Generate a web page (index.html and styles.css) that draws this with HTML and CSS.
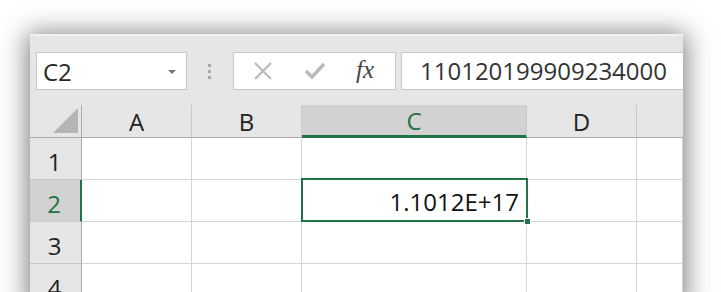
FILE: index.html
```html
<!DOCTYPE html>
<html lang="en">

<head>
  <meta charset="UTF-8" />
  <title>Sheet</title>
  <link rel="stylesheet" href="styles.css">
</head>

<body>
  <div class="window">
    <div class="toolbar">
      <div class="namebox">
        <span>C2</span>
        <span class="caret"></span>
      </div>
      <div class="grip"><i></i><i></i><i></i></div>
      <div class="buttons">
        <svg class="btn" width="22" height="22" viewBox="0 0 22 22">
          <path d="M3 3 L19 19 M19 3 L3 19" stroke="#b9b9b9" stroke-width="2.2" fill="none" />
        </svg>
        <svg class="btn" width="24" height="22" viewBox="0 0 24 22">
          <path d="M3 11 L9 17 L21 4" stroke="#b9b9b9" stroke-width="3.4" fill="none" />
        </svg>
        <span class="fx">fx</span>
      </div>
      <div class="formula">110120199909234000</div>
    </div>

    <div class="grid">
      <div class="corner"><span class="tri"></span></div>
      <div class="colhead">A</div>
      <div class="colhead">B</div>
      <div class="colhead active">C</div>
      <div class="colhead">D</div>
      <div class="colhead last"></div>

      <div class="rowhead">1</div>
      <div class="cell"></div>
      <div class="cell"></div>
      <div class="cell"></div>
      <div class="cell"></div>
      <div class="cell"></div>

      <div class="rowhead active">2</div>
      <div class="cell"></div>
      <div class="cell"></div>
      <div class="cell selected">1.1012E+17<span class="handle"></span></div>
      <div class="cell"></div>
      <div class="cell"></div>

      <div class="rowhead">3</div>
      <div class="cell"></div>
      <div class="cell"></div>
      <div class="cell"></div>
      <div class="cell"></div>
      <div class="cell"></div>

      <div class="rowhead">4</div>
      <div class="cell"></div>
      <div class="cell"></div>
      <div class="cell"></div>
      <div class="cell"></div>
      <div class="cell"></div>
    </div>
  </div>
</body>

</html>
```

FILE: styles.css
```css
* {
  box-sizing: border-box;
  margin: 0;
  padding: 0;
  font-family: 'Open Sans', 'Noto Sans', sans-serif;
}

body {
  background: #fff;
  height: 292px;
  overflow: hidden;
}

.window {
  margin: 34px 0 0 30px;
  width: 653px;
  background: #e6e6e6;
  border-top: 2px solid #f2f2f2;
  box-shadow: 0 2px 24px 3px rgba(0, 0, 0, 0.5);
}

.toolbar {
  display: flex;
  align-items: center;
  padding: 16px 0 15px 6px;
}

.namebox {
  width: 151px;
  height: 38px;
  background: #fff;
  border: 1px solid #c6c6c6;
  display: flex;
  align-items: center;
  justify-content: space-between;
  padding: 0 10px 0 6px;
  font-size: 24px;
  color: #262626;
}

.caret {
  width: 0;
  height: 0;
  border-left: 4px solid transparent;
  border-right: 4px solid transparent;
  border-top: 4px solid #777;
  margin-top: 2px;
}

.grip {
  display: flex;
  flex-direction: column;
  gap: 3px;
  margin: 0 22px 0 21px;
}

.grip i {
  width: 3px;
  height: 3px;
  background: #a8a8a8;
}

.buttons {
  width: 163px;
  height: 38px;
  background: #fff;
  border: 1px solid #c6c6c6;
  display: flex;
  align-items: center;
  padding: 0 0 0 18px;
}

.btn {
  margin-right: 29px;
}

.fx {
  font-family: 'Liberation Serif', serif;
  font-style: italic;
  font-size: 25px;
  color: #444;
  margin-top: -2px;
}

.formula {
  flex: 1;
  height: 38px;
  margin-left: 5px;
  background: #fff;
  border: 1px solid #c6c6c6;
  border-right: none;
  font-size: 24px;
  line-height: 36px;
  padding-left: 18px;
  color: #333;
}

.grid {
  display: grid;
  grid-template-columns: 52px 110px 110px 225px 110px 46px;
  grid-template-rows: 33px repeat(4, 42px);
}

.corner {
  border-right: 1px solid #ababab;
  border-bottom: 1px solid #ababab;
  position: relative;
}

.tri {
  position: absolute;
  right: 3px;
  bottom: 4px;
  width: 0;
  height: 0;
  border-left: 25px solid transparent;
  border-bottom: 25px solid #b5b5b5;
}

.colhead {
  border-right: 1px solid #c8c8c8;
  border-bottom: 1px solid #ababab;
  display: flex;
  align-items: center;
  justify-content: center;
  font-size: 24px;
  color: #222;
  padding-top: 1px;
}

.colhead.active {
  background: #d2d2d2;
  color: #217346;
  border-bottom: 3px solid #217346;
}

.colhead.last {
  border-right: none;
}

.rowhead {
  border-right: 1px solid #ababab;
  border-bottom: 1px solid #c8c8c8;
  display: flex;
  align-items: center;
  justify-content: center;
  font-size: 24px;
  color: #222;
  padding: 5px 2px 0 0;
}

.rowhead.active {
  background: #d2d2d2;
  color: #217346;
  border-right: 2px solid #217346;
}

.cell {
  background: #fff;
  border-right: 1px solid #d4d4d4;
  border-bottom: 1px solid #d4d4d4;
  font-size: 24px;
  color: #111;
  text-align: right;
  padding: 5px 7px 0 0;
}

.cell.selected {
  position: relative;
}

.cell.selected::after {
  content: "";
  position: absolute;
  top: -2px;
  left: -1px;
  right: -2px;
  bottom: -1px;
  border: 2px solid #217346;
}

.handle {
  position: absolute;
  right: -5px;
  bottom: -4px;
  width: 7px;
  height: 7px;
  background: #217346;
  border: 1px solid #fff;
  z-index: 1;
}
```
